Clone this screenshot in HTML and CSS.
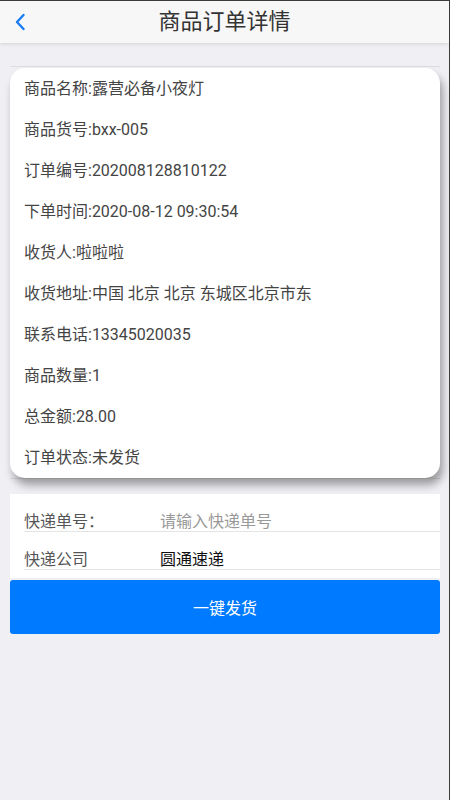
FILE: index.html
```html
<!DOCTYPE html>
<html lang="zh">
<head>
<meta charset="utf-8">
<title>商品订单详情</title>
<link rel="stylesheet" href="styles.css">
</head>
<body>
<div class="app">
  <header class="nav">
    <span class="back">
      <svg width="12" height="18" viewBox="0 0 12 18"><path d="M9.5 2 L3 9 L9.5 16" fill="none" stroke="#1a7cf5" stroke-width="2.4" stroke-linecap="round" stroke-linejoin="round"/></svg>
    </span>
    <h1 class="title">商品订单详情</h1>
  </header>

  <div class="wrap">
    <div class="card">
      <div class="row">商品名称:露营必备小夜灯</div>
      <div class="row">商品货号:bxx-005</div>
      <div class="row">订单编号:202008128810122</div>
      <div class="row">下单时间:2020-08-12 09:30:54</div>
      <div class="row">收货人:啦啦啦</div>
      <div class="row">收货地址:中国 北京 北京 东城区北京市东</div>
      <div class="row">联系电话:13345020035</div>
      <div class="row">商品数量:1</div>
      <div class="row">总金额:28.00</div>
      <div class="row">订单状态:未发货</div>
    </div>
  </div>

  <div class="form">
    <div class="field">
      <span class="label">快递单号：</span>
      <span class="placeholder">请输入快递单号</span>
    </div>
    <div class="field">
      <span class="label">快递公司</span>
      <span class="value">圆通速递</span>
    </div>
  </div>

  <button class="submit">一键发货</button>
</div>
</body>
</html>
```

FILE: styles.css
```css
html, body {
  margin: 0;
  padding: 0;
  background: #efeff4;
}
body {
  font-family: Roboto, "Noto Sans CJK SC", sans-serif;
}
.app {
  min-height: 800px;
  box-sizing: border-box;
  border-top: 1px solid #3c3c3c;
  border-right: 1px solid #3c3c3c;
}
.nav {
  position: relative;
  height: 42px;
  background: #f7f7f7;
  box-shadow: 0 1px 4px rgba(0, 0, 0, 0.12);
  display: flex;
  align-items: center;
  justify-content: center;
}
.back {
  position: absolute;
  left: 14px;
  top: 12px;
  width: 12px;
  height: 18px;
  display: flex;
}
.title {
  margin: 0;
  font-size: 22px;
  font-weight: 400;
  color: #333;
  line-height: 42px;
}
.wrap {
  margin: 23px 9px 0 10px;
  border-top: 1px solid #dcdce0;
  border-bottom: 1px solid #dcdce0;
  padding: 1px 0 0;
}
.card {
  background: #fff;
  border-radius: 15px;
  box-shadow: 3px 7px 8px rgba(0, 0, 0, 0.35);
  display: flex;
  flex-direction: column;
}
.row {
  height: 41px;
  line-height: 41px;
  padding-left: 14px;
  font-size: 16px;
  color: #444;
  white-space: nowrap;
}
.form {
  margin: 15px 9px 0 10px;
  background: #fff;
  padding: 0 0 8px 14px;
}
.field {
  display: flex;
  padding-top: 19px;
  height: 18px;
  line-height: 18px;
  border-bottom: 1px solid #e4e4e4;
  font-size: 16px;
}
.label {
  width: 136px;
  color: #555;
}
.placeholder {
  color: #999;
}
.value {
  color: #111;
}
.submit {
  display: flex;
  align-items: center;
  justify-content: center;
  margin: 2px 9px 0 10px;
  width: 430px;
  height: 54px;
  border: none;
  border-radius: 3px;
  background: #007aff;
  color: #fff;
  font-family: Roboto, "Noto Sans CJK SC", sans-serif;
  font-size: 16px;
  padding: 0;
}
```
